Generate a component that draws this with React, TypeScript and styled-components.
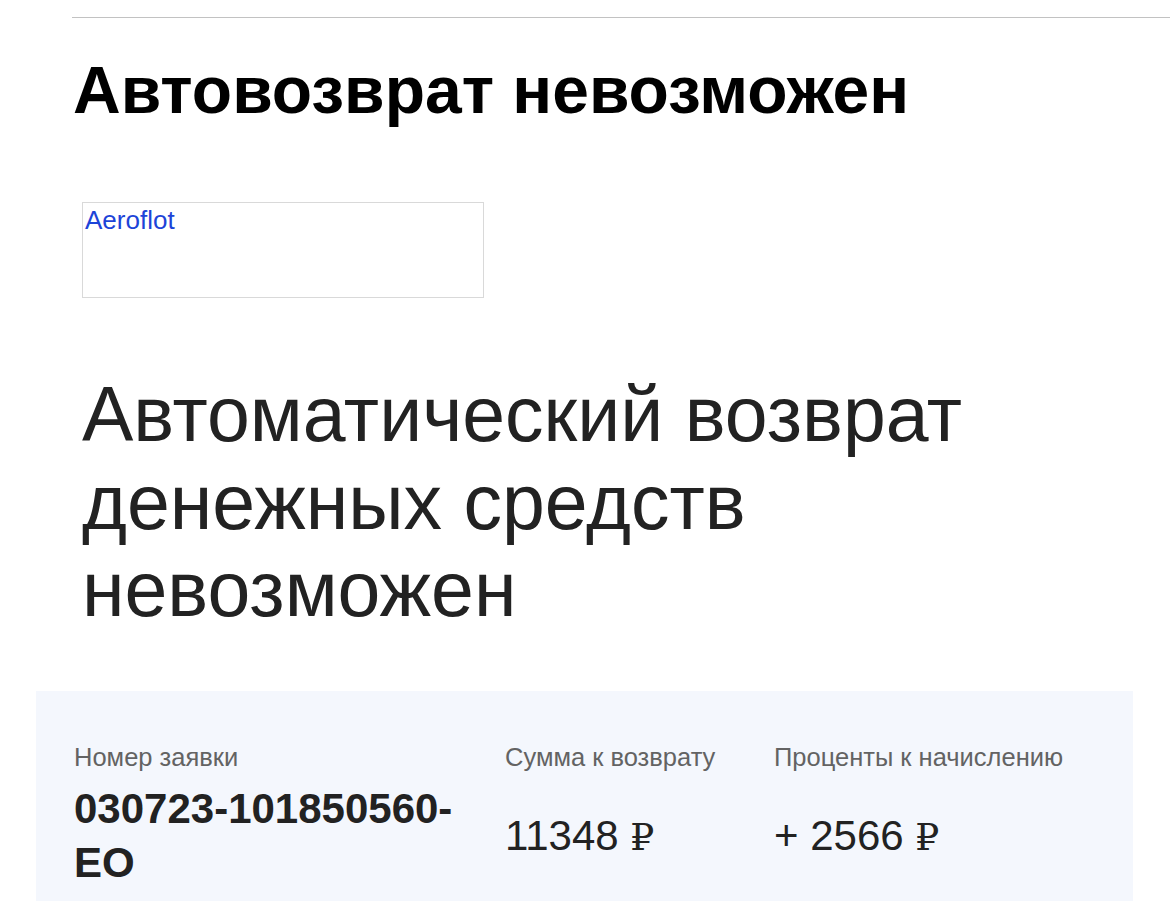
import * as React from 'react'
import styled, { createGlobalStyle } from 'styled-components'

const GlobalStyle = createGlobalStyle`
  html, body {
    margin: 0;
    padding: 0;
    background: #fff;
  }
  body {
    font-family: "Liberation Sans", Arial, sans-serif;
    color: #222;
  }
`

const Page = styled.div`
  width: 1170px;
  padding-top: 17px;
`

const Header = styled.header`
  margin-left: 72px;
`

const Rule = styled.hr`
  margin: 0;
  border: 0;
  border-top: 1px solid #c2c2c2;
`

const Title = styled.h1`
  margin: 35px 0 0 1px;
  font-size: 66px;
  line-height: 1.15;
  font-weight: 700;
  color: #000;
`

const Body = styled.section`
  padding: 73px 0 0 82px;
`

const Logo = styled.div`
  box-sizing: border-box;
  width: 402px;
  height: 96px;
  border: 1px solid #d9d9d9;
  padding: 3px 2px 0;
  font-size: 26px;
  line-height: 1.15;
  color: #1d44d8;
`

const Message = styled.p`
  margin: 73px 0 0;
  max-width: 920px;
  font-size: 77px;
  line-height: 1.14;
  font-weight: 400;
  color: #222;
`

const Panel = styled.div`
  margin: 57px 37px 0 36px;
  padding: 52px 38px 24px;
  background: #f4f7fd;
  display: grid;
  grid-template-columns: 431px 269px 1fr;
  row-gap: 9px;
  align-items: center;
`

const Label = styled.div`
  font-size: 25.5px;
  line-height: 1.15;
  color: #636363;
  align-self: end;
`

const Value = styled.div<{ $bold?: boolean }>`
  font-size: 42px;
  line-height: 1.3;
  font-weight: ${(p) => (p.$bold ? 700 : 400)};
  color: #222;
  padding-right: ${(p) => (p.$bold ? '20px' : '0')};
`

const Rub = styled.span`
  font-family: "Liberation Serif", "DejaVu Serif", serif;
  font-size: 0.9em;
`

export default function App() {
  return (
    <Page>
      <GlobalStyle />
      <Header>
        <Rule />
        <Title>Автовозврат невозможен</Title>
      </Header>
      <Body>
        <Logo>Aeroflot</Logo>
        <Message>Автоматический возврат денежных средств невозможен</Message>
      </Body>
      <Panel>
        <Label>Номер заявки</Label>
        <Label>Сумма к возврату</Label>
        <Label>Проценты к начислению</Label>
        <Value $bold>030723-101850560-EO</Value>
        <Value>
          11348 <Rub>₽</Rub>
        </Value>
        <Value>
          + 2566 <Rub>₽</Rub>
        </Value>
      </Panel>
    </Page>
  )
}
